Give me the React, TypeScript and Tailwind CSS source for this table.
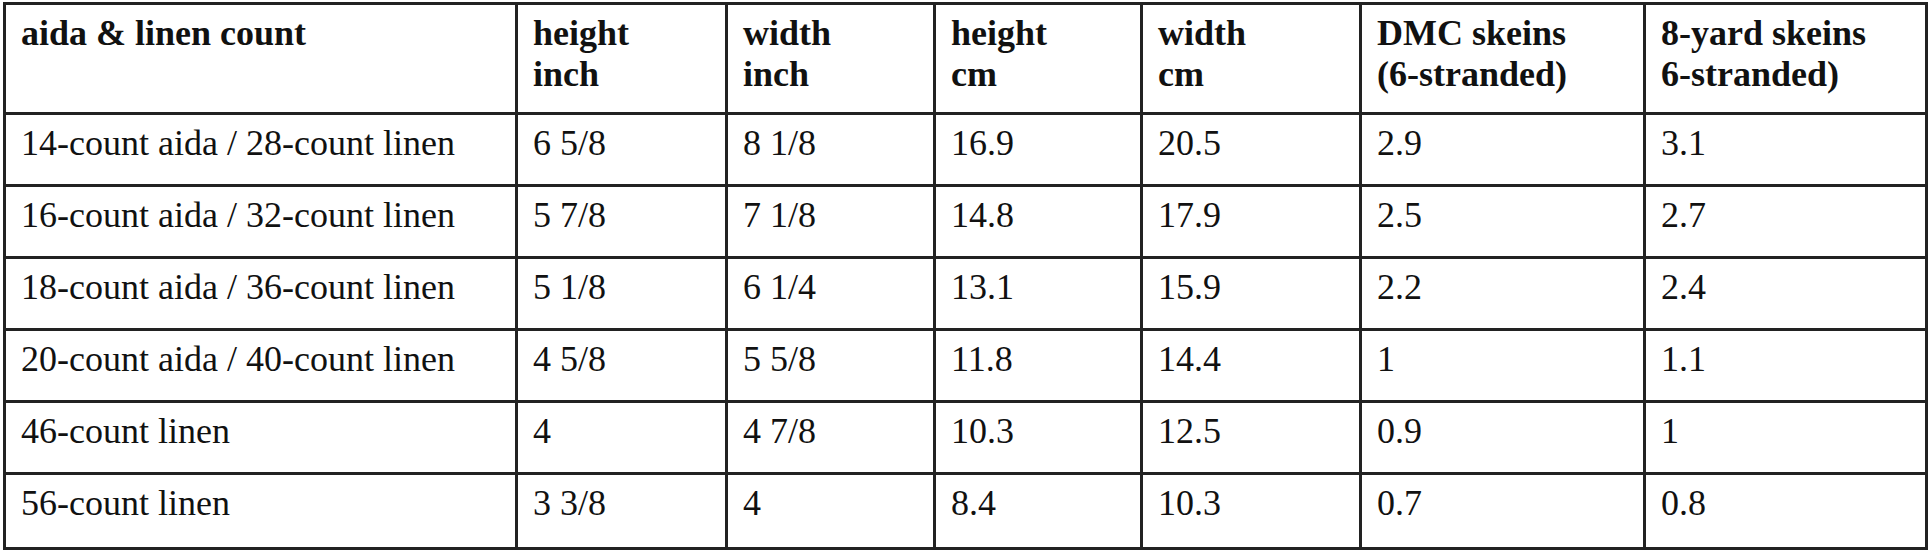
const headers = [
  ['aida & linen count'],
  ['height', 'inch'],
  ['width', 'inch'],
  ['height', 'cm'],
  ['width', 'cm'],
  ['DMC skeins', '(6-stranded)'],
  ['8-yard skeins', '6-stranded)'],
];

const rows = [
  ['14-count aida / 28-count linen', '6 5/8', '8 1/8', '16.9', '20.5', '2.9', '3.1'],
  ['16-count aida / 32-count linen', '5 7/8', '7 1/8', '14.8', '17.9', '2.5', '2.7'],
  ['18-count aida / 36-count linen', '5 1/8', '6 1/4', '13.1', '15.9', '2.2', '2.4'],
  ['20-count aida / 40-count linen', '4 5/8', '5 5/8', '11.8', '14.4', '1', '1.1'],
  ['46-count linen', '4', '4 7/8', '10.3', '12.5', '0.9', '1'],
  ['56-count linen', '3 3/8', '4', '8.4', '10.3', '0.7', '0.8'],
];

const cell = 'border-[3px] border-[#222] pl-[15px] pr-[10px] pt-[8px] align-top text-left';

export default function App() {
  return (
    <div className="min-h-screen bg-white pl-[3px] pt-[2px]">
      <table className="table-fixed border-collapse w-[1922px] [font-family:'Liberation_Serif',serif] text-[36px] leading-[41px] text-[#111]">
        <colgroup>
          <col className="w-[512px]" />
          <col className="w-[210px]" />
          <col className="w-[208px]" />
          <col className="w-[207px]" />
          <col className="w-[219px]" />
          <col className="w-[284px]" />
          <col className="w-[282px]" />
        </colgroup>
        <thead>
          <tr>
            {headers.map((h, i) => (
              <th key={i} className={cell + ' pb-[17px] font-bold'}>
                {h.map((line, j) => (
                  <div key={j}>{line}</div>
                ))}
              </th>
            ))}
          </tr>
        </thead>
        <tbody>
          {rows.map((r, i) => (
            <tr key={i}>
              {r.map((v, j) => (
                <td key={j} className={cell + (i === rows.length - 1 ? ' pb-[23px]' : ' pb-[20px]')}>
                  {v}
                </td>
              ))}
            </tr>
          ))}
        </tbody>
      </table>
    </div>
  );
}
